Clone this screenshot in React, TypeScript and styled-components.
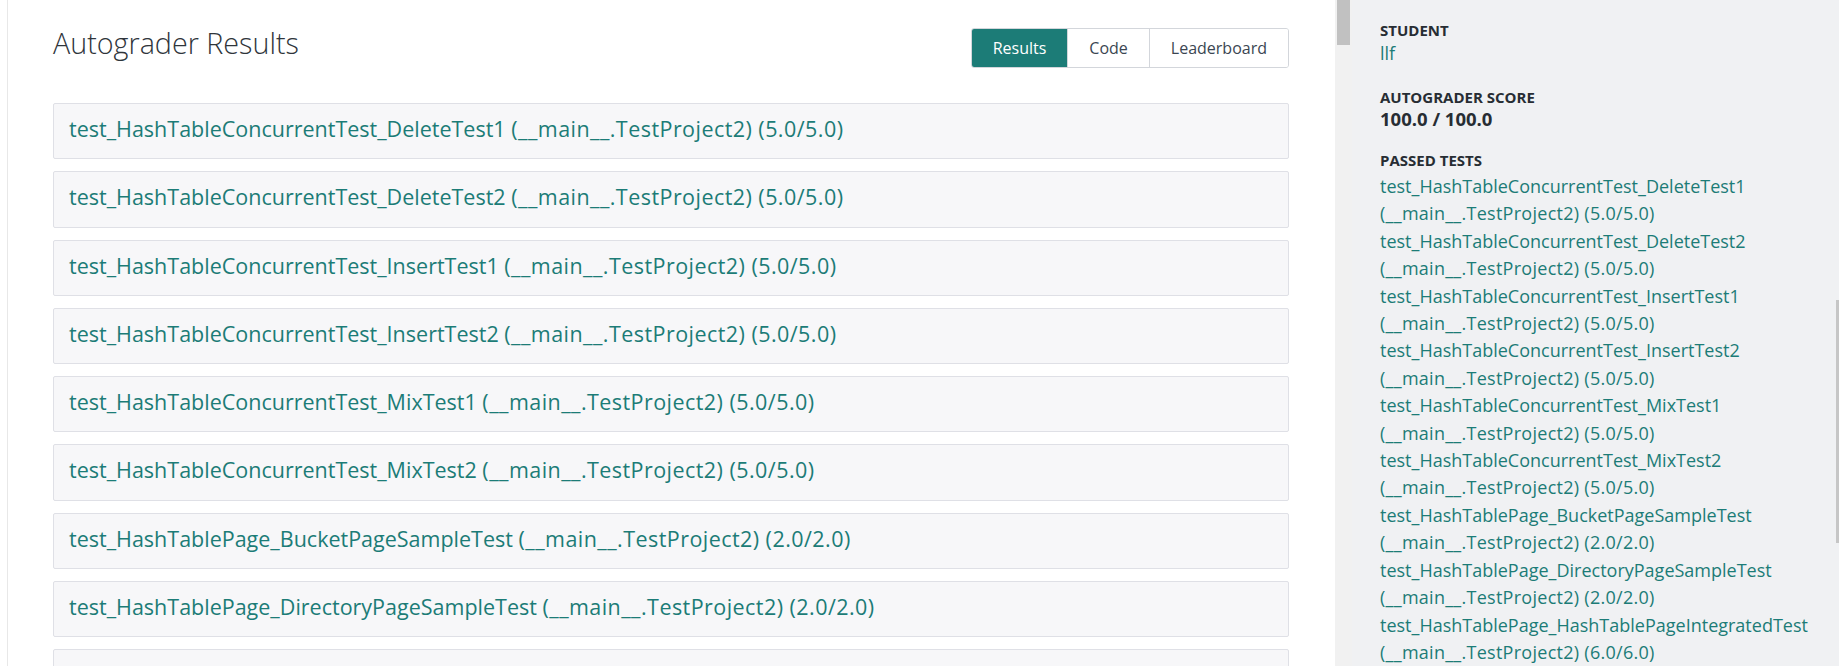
import React from "react";
import styled, { createGlobalStyle } from "styled-components";

const GlobalStyle = createGlobalStyle`
  html, body {
    margin: 0;
    padding: 0;
    background: #ffffff;
    font-family: "Open Sans", "Noto Sans", "Liberation Sans", sans-serif;
    overflow: hidden;
  }
  * { box-sizing: border-box; }
`;

const TEAL = "#1c7c77";
const INK = "#272d33";

const Page = styled.div`
  display: flex;
  height: 666px;
  width: 1839px;
  overflow: hidden;
`;

const MainPane = styled.div`
  display: flex;
  width: 1352px;
  flex: none;
  height: 100%;
`;

const MainContent = styled.main`
  flex: 1;
  margin-left: 7px;
  border-left: 1px solid #e8e8e8;
  padding: 26px 46px 0 45px;
  overflow: hidden;
`;

const ScrollTrack = styled.div`
  width: 17px;
  flex: none;
  background: #f1f1f1;
  display: flex;
  flex-direction: column;
  align-items: center;
`;

const ScrollThumb = styled.div`
  width: 13px;
  height: 45px;
  background: #c1c1c1;
`;

const Header = styled.header`
  display: flex;
  justify-content: space-between;
  align-items: flex-start;
`;

const Title = styled.h1`
  margin: 0;
  font-size: 28.7px;
  line-height: 34px;
  font-weight: 300;
  color: #2f353b;
`;

const TabGroup = styled.nav`
  display: flex;
  margin-top: 2px;
  height: 40px;
  border: 1px solid #d3d6db;
  border-radius: 3px;
  overflow: hidden;
`;

const Tab = styled.button<{ $active?: boolean }>`
  font-family: inherit;
  font-size: 16px;
  padding: 0 21px;
  border: none;
  border-left: 1px solid ${(p) => (p.$active ? "#166a66" : "#d3d6db")};
  background: ${(p) => (p.$active ? TEAL : "#ffffff")};
  color: ${(p) => (p.$active ? "#ffffff" : "#3b4652")};
  cursor: pointer;
  &:first-child {
    border-left: none;
  }
`;

const ResultList = styled.ul`
  list-style: none;
  margin: 35px 0 0;
  padding: 0;
  display: flex;
  flex-direction: column;
  gap: 12px;
`;

const ResultRow = styled.li`
  background: #f7f7f9;
  border: 1px solid #dfe0e6;
  border-radius: 2px;
  padding: 11px 15px 15.3px;
  font-size: 21.5px;
  line-height: 28px;
  color: ${TEAL};
  white-space: nowrap;
`;

const Detail = styled.span<{ $spacing: number }>`
  letter-spacing: ${(p) => p.$spacing}px;
`;

const Sidebar = styled.aside`
  flex: 1;
  position: relative;
  background: #f0f1f3;
  padding: 20px 10px 0 28px;
  overflow: hidden;
  display: flex;
  flex-direction: column;
  gap: 21px;
`;

const SideThumb = styled.div`
  position: absolute;
  right: 0;
  top: 300px;
  width: 3px;
  height: 243px;
  background: #c6c6c6;
`;

const Section = styled.section`
  display: flex;
  flex-direction: column;
`;

const Label = styled.div`
  font-size: 15px;
  line-height: 20px;
  font-weight: 700;
  text-transform: uppercase;
  color: ${INK};
`;

const Value = styled.div<{ $strong?: boolean }>`
  margin-top: ${(p) => (p.$strong ? "2px" : "0")};
  font-size: ${(p) => (p.$strong ? "18.5px" : "18px")};
  line-height: ${(p) => (p.$strong ? "20px" : "26px")};
  font-weight: ${(p) => (p.$strong ? 700 : 400)};
  color: ${(p) => (p.$strong ? INK : TEAL)};
`;

const TestList = styled.ul`
  list-style: none;
  margin: 3px 0 0;
  padding: 0;
`;

const TestItem = styled.li`
  font-size: 18px;
  line-height: 27.4px;
  color: ${TEAL};
  white-space: nowrap;
`;

const TestName = styled.span`
  display: block;
`;

type Test = { name: string; score: string };

const tests: Test[] = [
  { name: "test_HashTableConcurrentTest_DeleteTest1", score: "5.0/5.0" },
  { name: "test_HashTableConcurrentTest_DeleteTest2", score: "5.0/5.0" },
  { name: "test_HashTableConcurrentTest_InsertTest1", score: "5.0/5.0" },
  { name: "test_HashTableConcurrentTest_InsertTest2", score: "5.0/5.0" },
  { name: "test_HashTableConcurrentTest_MixTest1", score: "5.0/5.0" },
  { name: "test_HashTableConcurrentTest_MixTest2", score: "5.0/5.0" },
  { name: "test_HashTablePage_BucketPageSampleTest", score: "2.0/2.0" },
  { name: "test_HashTablePage_DirectoryPageSampleTest", score: "2.0/2.0" },
  { name: "test_HashTablePage_HashTablePageIntegratedTest", score: "6.0/6.0" },
  { name: "test_HashTableTest_GrowShrinkTest", score: "25.0/25.0" },
  { name: "test_HashTableTest_IntegratedTest", score: "15.0/15.0" },
  { name: "test_HashTableTest_SampleTest", score: "20.0/20.0" },
];

const MODULE = "(__main__.TestProject2)";

export default function App() {
  return (
    <>
      <GlobalStyle />
      <Page>
        <MainPane>
          <MainContent>
            <Header>
              <Title>Autograder Results</Title>
              <TabGroup>
                <Tab $active>Results</Tab>
                <Tab>Code</Tab>
                <Tab>Leaderboard</Tab>
              </TabGroup>
            </Header>
            <ResultList>
              {tests.map((t) => (
                <ResultRow key={t.name}>
                  {t.name}{" "}
                  <Detail $spacing={0.45}>
                    {MODULE} ({t.score})
                  </Detail>
                </ResultRow>
              ))}
            </ResultList>
          </MainContent>
          <ScrollTrack>
            <ScrollThumb />
          </ScrollTrack>
        </MainPane>
        <Sidebar>
          <Section>
            <Label>Student</Label>
            <Value>llf</Value>
          </Section>
          <Section>
            <Label>Autograder Score</Label>
            <Value $strong>100.0 / 100.0</Value>
          </Section>
          <Section>
            <Label>Passed Tests</Label>
            <TestList>
              {tests.map((t) => (
                <TestItem key={t.name}>
                  <TestName>{t.name}</TestName>
                  <Detail $spacing={0.27}>
                    {MODULE} ({t.score})
                  </Detail>
                </TestItem>
              ))}
            </TestList>
          </Section>
          <SideThumb />
        </Sidebar>
      </Page>
    </>
  );
}
